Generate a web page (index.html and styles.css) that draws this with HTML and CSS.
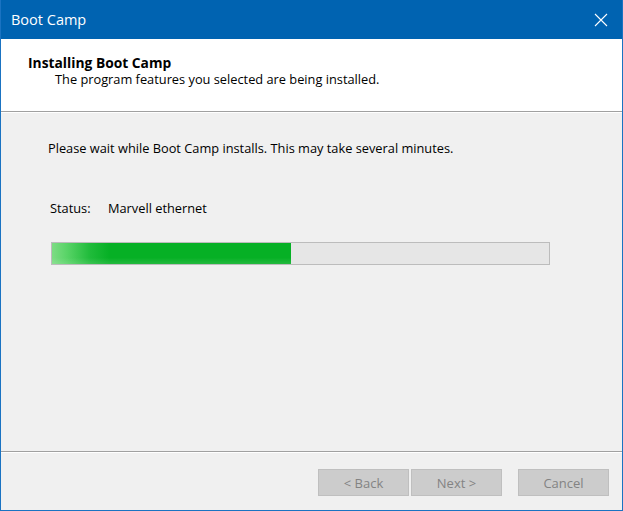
FILE: index.html
```html
<!DOCTYPE html>
<html>
<head>
  <meta charset="utf-8">
  <title>Boot Camp</title>
  <link rel="stylesheet" href="styles.css">
</head>
<body>
  <div class="window">
    <div class="titlebar">
      <span class="title">Boot Camp</span>
      <svg class="close" width="14" height="14" viewBox="0 0 14 14">
        <path d="M1 1 L13 13 M13 1 L1 13" stroke="#fff" stroke-width="1.1" fill="none"/>
      </svg>
    </div>
    <div class="header">
      <div class="header-title">Installing Boot Camp</div>
      <div class="header-sub">The program features you selected are being installed.</div>
    </div>
    <div class="body">
      <p class="wait">Please wait while Boot Camp installs. This may take several minutes.</p>
      <div class="status">
        <span class="status-label">Status:</span>
        <span>Marvell ethernet</span>
      </div>
      <div class="progress">
        <div class="progress-fill" style="width: 48%"></div>
      </div>
    </div>
    <div class="footer">
      <button class="btn" disabled>&lt; Back</button>
      <button class="btn" disabled>Next &gt;</button>
      <button class="btn btn-cancel" disabled>Cancel</button>
    </div>
  </div>
</body>
</html>
```

FILE: styles.css
```css
body {
  margin: 0;
  padding: 0;
  font-family: "Open Sans", "Noto Sans", sans-serif;
  font-size: 12.8px;
  color: #000;
}

.window {
  width: 623px;
  height: 511px;
  box-sizing: border-box;
  border: 1px solid #1a73c2;
  border-top: none;
  background: #f0f0f0;
  display: flex;
  flex-direction: column;
}

.titlebar {
  height: 39px;
  background: #0063b1;
  display: flex;
  align-items: center;
  justify-content: space-between;
  padding: 0 14px 0 10px;
  flex-shrink: 0;
}

.title {
  color: #fff;
  font-size: 14.5px;
}

.header {
  height: 73px;
  background: #fff;
  border-bottom: 1px solid #a0a0a0;
  box-shadow: 0 1px 0 #fff;
  padding: 15px 0 0 27px;
  box-sizing: border-box;
  flex-shrink: 0;
}

.header-title {
  font-weight: bold;
  font-size: 13.8px;
  line-height: 17px;
}

.header-sub {
  padding-left: 27px;
  line-height: 17px;
}

.body {
  flex: 1;
  padding: 28px 0 0 47px;
  border-bottom: 1px solid #a0a0a0;
  box-shadow: 0 1px 0 #fff;
}

.wait {
  margin: 0;
  line-height: 17px;
}

.status {
  margin-top: 43px;
  padding-left: 2px;
  line-height: 17px;
  display: flex;
}

.status-label {
  width: 58px;
}

.progress {
  margin-top: 25px;
  margin-left: 3px;
  width: 499px;
  height: 23px;
  box-sizing: border-box;
  border: 1px solid #bcbcbc;
  background: #e6e6e6;
}

.progress-fill {
  height: 100%;
  background:
    linear-gradient(to bottom, rgba(255, 255, 255, 0) 70%, rgba(255, 255, 255, 0.12) 100%),
    linear-gradient(to right, #7ddc84 0%, #5ad468 6%, #1fbb3a 16%, #06b025 24%, #06b025 100%);
}

.footer {
  height: 58px;
  flex-shrink: 0;
  display: flex;
  justify-content: flex-end;
  align-items: flex-start;
  padding: 17px 13px 0 0;
  box-sizing: border-box;
}

.btn {
  width: 91px;
  height: 27px;
  margin-left: 2px;
  background: #cccccc;
  border: 1px solid #bfbfbf;
  color: #838383;
  font-family: "Open Sans", "Noto Sans", sans-serif;
  font-size: 13px;
  padding: 0;
}

.btn-cancel {
  margin-left: 16px;
}
```
